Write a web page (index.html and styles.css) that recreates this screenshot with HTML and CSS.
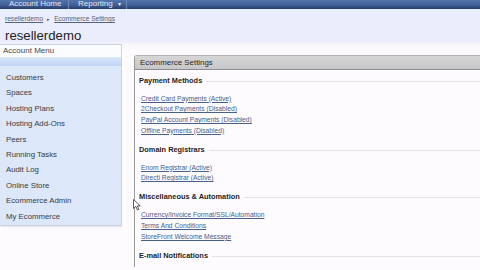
FILE: index.html
```html
<!DOCTYPE html>
<html>
<head>
<meta charset="utf-8">
<link rel="stylesheet" href="styles.css">
</head>
<body>
<div class="topnav">
  <div class="tab tab-home">Account Home</div>
  <div class="tab tab-rep">Reporting <span class="caret">▾</span></div>
</div>
<div class="header">
  <div class="crumbs"><a>resellerdemo</a><span class="sep">▸</span><a>Ecommerce Settings</a></div>
  <div class="title">resellerdemo</div>
</div>
<div class="main">
  <div class="menu">
    <div class="menu-head">Account Menu</div>
    <div class="menu-bar"></div>
    <div class="menu-body">
      <div class="item">Customers</div>
      <div class="item">Spaces</div>
      <div class="item">Hosting Plans</div>
      <div class="item">Hosting Add-Ons</div>
      <div class="item">Peers</div>
      <div class="item">Running Tasks</div>
      <div class="item">Audit Log</div>
      <div class="item">Online Store</div>
      <div class="item">Ecommerce Admin</div>
      <div class="item">My Ecommerce</div>
    </div>
  </div>
  <div class="content">
    <div class="panel">
      <div class="panel-head">Ecommerce Settings</div>
      <div class="panel-body">
        <div class="sec-head"><span>Payment Methods</span><i class="rule"></i></div>
        <div class="links">
          <a>Credit Card Payments (Active)</a>
          <a>2Checkout Payments (Disabled)</a>
          <a>PayPal Account Payments (Disabled)</a>
          <a>Offline Payments (Disabled)</a>
        </div>
        <div class="sec-head"><span>Domain Registrars</span><i class="rule"></i></div>
        <div class="links">
          <a>Enom Registrar (Active)</a>
          <a>Directi Registrar (Active)</a>
        </div>
        <div class="sec-head"><span>Miscellaneous &amp; Automation</span><i class="rule"></i></div>
        <div class="links">
          <a>Currency/Invoice Format/SSL/Automation</a>
          <a>Terms And Conditions</a>
          <a>StoreFront Welcome Message</a>
        </div>
        <div class="sec-head"><span>E-mail Notifications</span><i class="rule"></i></div>
      </div>
    </div>
  </div>
</div>
<svg class="cursor" width="8" height="12" viewBox="0 0 8 12"><path d="M0.5 0.5 L0.5 9.5 L2.8 7.4 L4.4 11 L5.8 10.4 L4.3 6.9 L7.3 6.9 Z" fill="#fff" stroke="#333" stroke-width="0.8"/></svg>
</body>
</html>
```

FILE: styles.css
```css
html, body {
  margin: 0;
  padding: 0;
}
body {
  width: 480px;
  height: 270px;
  overflow: hidden;
  position: relative;
  background: #fdfbfd;
  font-family: "Liberation Sans", Arial, sans-serif;
  color: #333;
}
.topnav {
  height: 9px;
  display: flex;
  background: linear-gradient(#5274ad, #3f5d95 60%, #2b3b63);
  overflow: hidden;
}
.tab {
  font-size: 8px;
  line-height: 7px;
  height: 9px;
  color: #e4e8f4;
  box-sizing: border-box;
  border-right: 1px solid #6d88b8;
}
.tab-home {
  width: 69px;
  padding-left: 9px;
}
.tab-rep {
  width: 58px;
  padding-left: 9px;
}
.caret {
  font-size: 6px;
  margin-left: 3px;
}
.header {
  height: 35px;
  box-sizing: border-box;
  background: linear-gradient(#e6effc, #eaeefc 15%, #eaedfc);
  padding: 6px 0 0 5px;
  border-bottom: 2px solid #f2f1fa;
}
.crumbs {
  font-size: 6.6px;
  line-height: 8px;
  color: #56607a;
}
.crumbs a {
  text-decoration: underline;
}
.sep {
  font-size: 5px;
  margin: 0 4px;
  color: #556;
}
.title {
  margin-top: 5px;
  font-size: 13.2px;
  line-height: 15px;
  color: #222;
}
.main {
  display: flex;
  align-items: flex-start;
}
.menu {
  width: 122px;
  height: 182px;
  box-sizing: border-box;
  border: 1px solid #c9d3e2;
  border-left: none;
  background: #dce8fa;
  box-shadow: 1px 1px 1px #e4e6ee;
}
.menu-head {
  height: 12px;
  background: #fbfcfe;
  font-size: 8px;
  line-height: 11px;
  padding-left: 3px;
  color: #4a4a4a;
}
.menu-bar {
  height: 8px;
  margin-top: 1px;
  background: linear-gradient(#d8e5fa, #c0d4f3);
}
.menu-body {
  padding-top: 4px;
}
.item {
  height: 15.4px;
  line-height: 15.4px;
  font-size: 7.8px;
  padding-left: 6px;
  color: #3a3a3a;
}
.content {
  flex: 1;
  padding: 11px 0 0 12px;
  background: linear-gradient(#f7f6fb, #fdfbfd 8px);
  min-width: 0;
}
.panel {
  width: 400px;
  height: 211px;
  border-left: 1px solid #9a9a9a;
  border-top: 1px solid #b0b0b0;
  border-top-left-radius: 3px;
  background: #fdfbfd;
}
.panel-head {
  height: 14px;
  box-sizing: border-box;
  background: linear-gradient(#d6d6d6, #c7c6c9);
  border-bottom: 1px solid #8e8c92;
  border-top-left-radius: 3px;
  font-size: 7.9px;
  line-height: 13px;
  padding-left: 5px;
  color: #2a2a2a;
}
.panel-body {
  padding: 5px 0 0 4px;
}
.sec-head {
  display: flex;
  align-items: center;
  height: 10px;
  font-size: 7.4px;
  font-weight: bold;
  color: #1e1e1e;
  gap: 4px;
}
.sec-head span {
  white-space: nowrap;
}
.rule {
  flex: 1;
  height: 1px;
  background: #e4e2e6;
  margin-top: 2px;
}
.links {
  display: flex;
  flex-direction: column;
  padding: 8.6px 0 7.7px 2px;
}
.links a {
  height: 10.7px;
  line-height: 10.7px;
  font-size: 6.7px;
  color: #46608a;
  text-decoration: underline;
  white-space: nowrap;
}
.cursor {
  position: absolute;
  left: 133px;
  top: 199px;
}
```
